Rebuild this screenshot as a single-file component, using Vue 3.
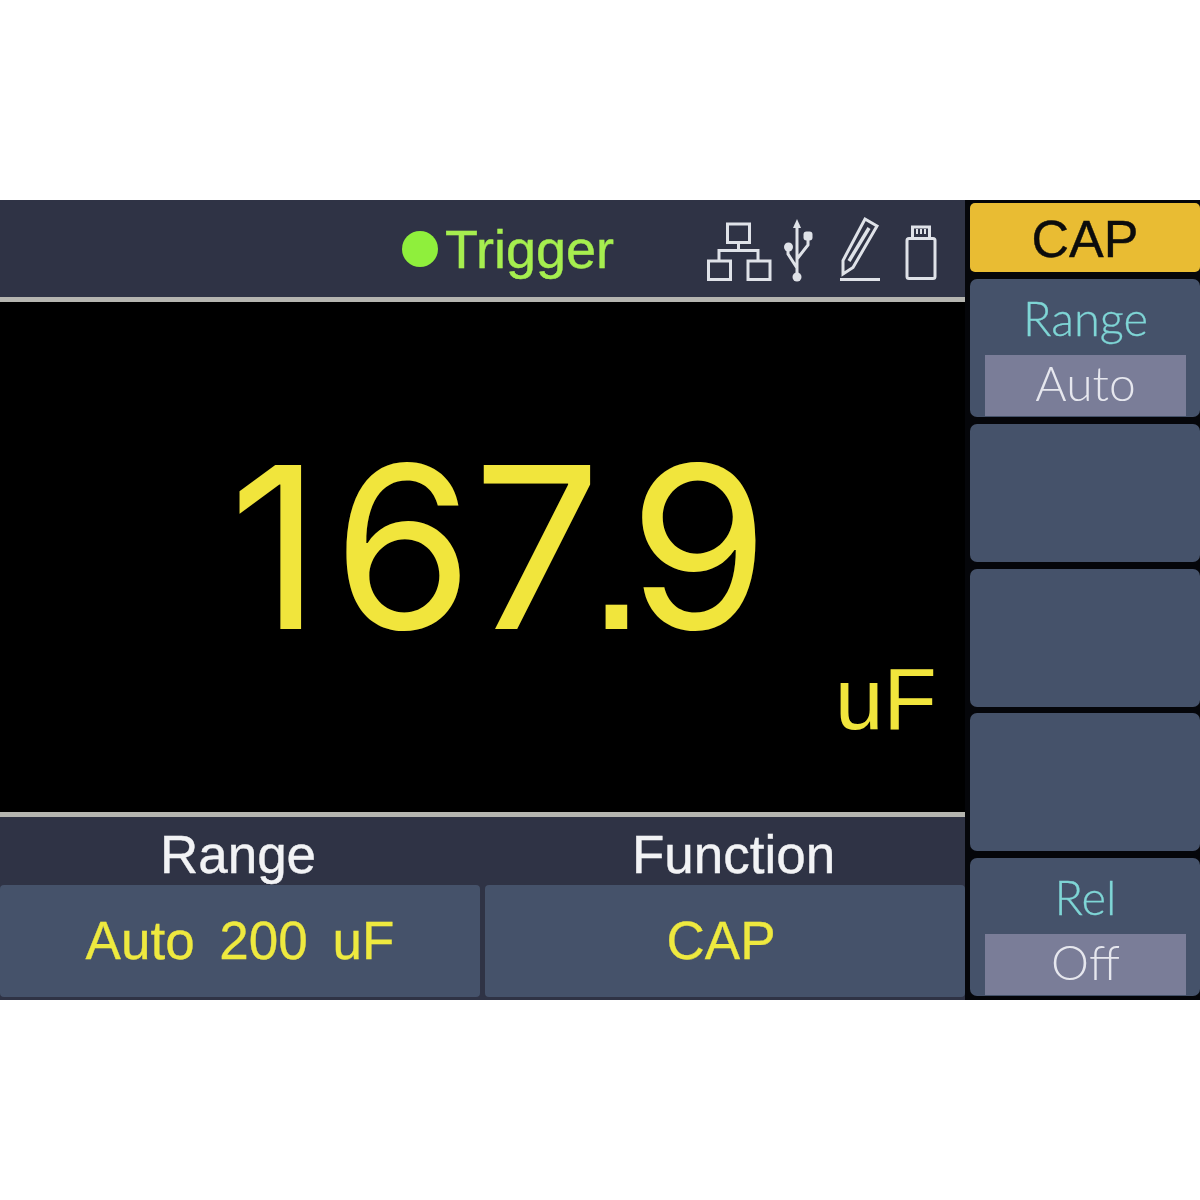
<template>
  <div class="page">
    <div class="screen">
      <div class="left">
        <header class="status">
          <div class="trigger"><span class="dot"></span><span>Trigger</span></div>
          <div class="icons">
            <svg width="66" height="66" viewBox="0 0 66 66" fill="none" stroke="#dfe2e8" stroke-width="3">
              <rect x="21.5" y="8" width="22" height="18.5" />
              <path d="M32.5 26.5V34.5M13 44.5V34.5H52V44.5" />
              <rect x="2.5" y="45" width="22" height="18.5" />
              <rect x="42" y="45" width="22" height="18.5" />
            </svg>
            <svg class="ic-usb" width="30" height="66" viewBox="0 0 30 66" fill="none" stroke="#dfe2e8" stroke-width="3">
              <path d="M13 8V61M4 32V38L13 52M24 20V29L13 43" />
              <path d="M13 3L17 12H9Z" fill="#dfe2e8" stroke="none" />
              <circle cx="4.5" cy="31" r="4.5" fill="#dfe2e8" stroke="none" />
              <rect x="19.5" y="15.5" width="9" height="9" rx="3" fill="#dfe2e8" stroke="none" />
              <circle cx="13" cy="61" r="4.5" fill="#dfe2e8" stroke="none" />
            </svg>
            <svg class="ic-pen" width="44" height="66" viewBox="0 0 44 66" fill="none" stroke="#dfe2e8" stroke-width="3">
              <path d="M27 3L39 10L15 51.5L5 58L5 44.5Z" />
              <path d="M31 12L11 45" stroke-width="3.5" />
              <path d="M2 63.5H42" />
            </svg>
            <svg class="ic-drive" width="34" height="66" viewBox="0 0 34 66" fill="none" stroke="#dfe2e8" stroke-width="3">
              <rect x="3" y="22.5" width="28" height="40" rx="2" />
              <path d="M8.5 22.5V11H25.5V22.5" />
              <path d="M13 13V18M17 13V18M21 13V18" stroke-width="2" />
            </svg>
          </div>
        </header>
        <main class="reading">
          <div class="value"><span class="one">1</span>6<span class="seven">7</span><span class="point">.</span>9</div>
          <div class="unit">uF</div>
        </main>
        <footer class="bottom">
          <div class="col" v-for="c in cols" :key="c.label">
            <div class="col-label" :class="c.cls">{{ c.label }}</div>
            <div class="col-box" :class="c.cls + '-box'">{{ c.value }}</div>
          </div>
        </footer>
      </div>
      <aside class="side">
        <div class="title">CAP</div>
        <div class="key" v-for="(k, i) in keys" :key="i">
          <template v-if="k">
            <div class="key-name">{{ k.name }}</div>
            <div class="key-val">{{ k.val }}</div>
          </template>
        </div>
      </aside>
    </div>
  </div>
</template>

<script setup>
const cols = [
  { label: 'Range', value: 'Auto 200 uF', cls: 'lab-range' },
  { label: 'Function', value: 'CAP', cls: 'lab-func' }
]
const keys = [
  { name: 'Range', val: 'Auto' },
  null,
  null,
  null,
  { name: 'Rel', val: 'Off' }
]
</script>

<style>
html, body { background: #fff; }
</style>

<style scoped>
.page {
  height: 1200px;
  padding-top: 200px;
  box-sizing: border-box;
  background: #fff;
  overflow: hidden;
  font-family: "Liberation Sans", Arial, sans-serif;
}
.screen {
  height: 800px;
  display: flex;
  background: #05060a;
  filter: blur(0.7px);
}
.left {
  width: 965px;
  display: flex;
  flex-direction: column;
}
.status {
  height: 97px;
  background: #2f3345;
  display: flex;
  align-items: center;
  padding-left: 402px;
  border-bottom: 5px solid #b5b5b0;
}
.trigger {
  display: flex;
  align-items: center;
  gap: 7px;
  width: 304px;
  color: #a6ee4f;
  font-size: 54px;
  -webkit-text-stroke: 0.4px #a6ee4f;
}
.dot {
  width: 36px;
  height: 36px;
  border-radius: 50%;
  background: #8fef3c;
}
.icons {
  display: flex;
  align-items: center;
}
.ic-usb { margin-left: 12px; }
.ic-pen { margin-left: 24px; }
.ic-drive { margin-left: 22px; }
.reading {
  height: 510px;
  background: #000;
  box-sizing: border-box;
  padding: 132px 0 0 229px;
  color: #f1e53c;
}
.value {
  font-family: Inter, "Liberation Sans", sans-serif;
  font-size: 226px;
  line-height: 226px;
  white-space: nowrap;
}
.one { letter-spacing: 12px; }
.seven { letter-spacing: -16px; }
.point {
  letter-spacing: -19px;
  font-family: "Liberation Sans", sans-serif;
}
.unit {
  font-size: 87px;
  line-height: 87px;
  margin: -9px 0 0 606px;
}
.bottom {
  flex: 1;
  display: flex;
  gap: 5px;
  background: #2f3345;
  border-top: 5px solid #b5b5b0;
}
.col {
  width: 480px;
  display: flex;
  flex-direction: column;
}
.col-label {
  height: 68px;
  line-height: 76px;
  color: #f2f3f5;
  font-size: 53px;
  -webkit-text-stroke: 0.4px #f2f3f5;
}
.lab-range { text-align: center; padding-right: 4px; }
.lab-func { padding-left: 147px; }
.col-box {
  height: 112px;
  line-height: 112px;
  text-align: center;
  background: #45526a;
  border-radius: 4px;
  color: #eee93f;
  font-size: 53px;
  -webkit-text-stroke: 0.3px #eee93f;
}
.lab-range-box { word-spacing: 10px; }
.lab-func-box { padding-right: 8px; }
.side {
  width: 230px;
  margin-left: 5px;
  padding-top: 3px;
  box-sizing: border-box;
  display: flex;
  flex-direction: column;
}
.title {
  height: 69px;
  flex-shrink: 0;
  line-height: 72px;
  margin-bottom: 7px;
  text-align: center;
  background: #e9bc33;
  border-radius: 5px;
  color: #0c0c0c;
  font-size: 52px;
  -webkit-text-stroke: 0.4px #0c0c0c;
}
.key {
  height: 138px;
  flex-shrink: 0;
  margin-bottom: 6.75px;
  padding: 0 14px 0 15px;
  display: flex;
  flex-direction: column;
  background: #45526a;
  border-radius: 7px;
}
.key-name, .key-val {
  font-family: Lato, "Liberation Sans", sans-serif;
  font-weight: 300;
  text-align: center;
}
.key-name {
  height: 76px;
  line-height: 79px;
  font-size: 47px;
  color: #7fd6d6;
  -webkit-text-stroke: 0.3px #7fd6d6;
}
.key-val {
  height: 61px;
  line-height: 56px;
  font-size: 48px;
  background: #7a7d98;
  color: #e6e7ee;
}
</style>
